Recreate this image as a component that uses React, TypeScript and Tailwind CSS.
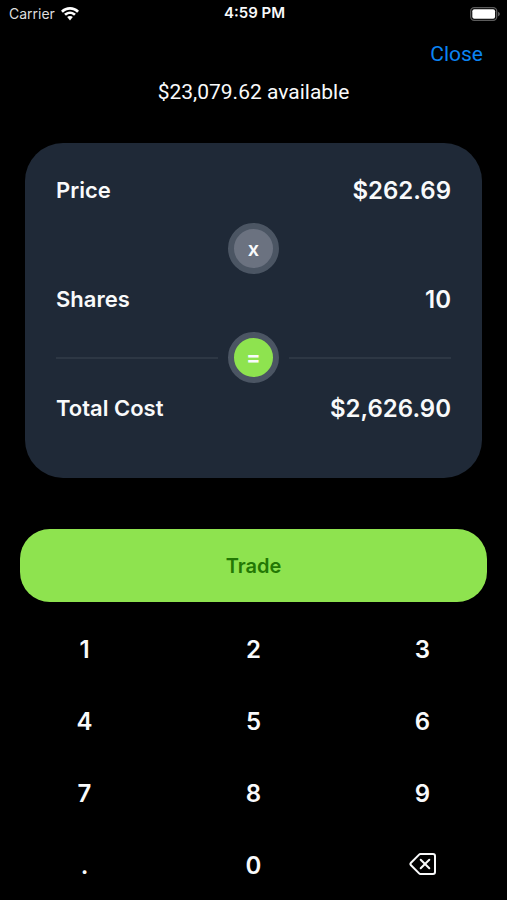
import React, { useCallback, useState } from 'react'

const price = 262.69
const available = 23079.62

const keys: ReadonlyArray<string> = ['1', '2', '3', '4', '5', '6', '7', '8', '9', '.', '0']

const formatUsd = (value: number): string =>
  value.toLocaleString('en-US', { style: 'currency', currency: 'USD' })

const WifiIcon = (): React.JSX.Element => (
  <svg viewBox="0 0 18 14" className="h-[14px] w-[18px]" fill="#fff" aria-hidden="true">
    <path d="M9 0C5.600 0 2.500 1.300 0 3.700L1.900 5.700C3.800 3.900 6.300 2.800 9 2.800s5.200 1.100 7.100 2.900L18 3.700C15.500 1.300 12.400 0 9 0Z" />
    <path d="M9 4.400c-2.300 0-4.300.9-5.900 2.400L5 8.800c1.100-1 2.500-1.700 4-1.700s2.900.7 4 1.700l1.900-2C13.300 5.300 11.300 4.400 9 4.400Z" />
    <path d="M9 8.900c-1.100 0-2.100.4-2.800 1.100L9 13.600l2.800-3.600C11.100 9.300 10.100 8.900 9 8.900Z" />
  </svg>
)

const BatteryIcon = (): React.JSX.Element => (
  <svg viewBox="0 0 30 14" className="h-[14px] w-[30px]" aria-hidden="true">
    <rect x="0.700" y="0.700" width="26" height="12.600" rx="3.500" fill="none" stroke="#5c5c5c" strokeWidth="1.300" />
    <rect x="2.300" y="2.300" width="22.800" height="9.400" rx="2" fill="#fff" />
    <path d="M28 4.700c1.200.4 1.900 1.300 1.900 2.300S29.200 8.900 28 9.300Z" fill="#5c5c5c" />
  </svg>
)

const DeleteIcon = (): React.JSX.Element => (
  <svg
    viewBox="0 0 28 24"
    className="h-6 w-7"
    fill="none"
    stroke="currentColor"
    strokeWidth="2"
    strokeLinecap="round"
    strokeLinejoin="round"
    aria-hidden="true"
  >
    <path d="M11.500 2H24a2 2 0 0 1 2 2v16a2 2 0 0 1-2 2H11.500a2 2 0 0 1-1.400-.6L2 13.200a1.700 1.700 0 0 1 0-2.400l8.100-8.200A2 2 0 0 1 11.500 2Z" />
    <path d="m11.700 7.700 8.600 8.600M20.300 7.700l-8.600 8.600" />
  </svg>
)

const StatusBar = (): React.JSX.Element => (
  <div className="grid h-[27px] grid-cols-3 items-center pr-[7px] pl-[9px]">
    <div className="flex items-center gap-[6px] text-[14px] text-[#dedede]">
      <span>Carrier</span>
      <WifiIcon />
    </div>
    <span className="text-center text-[15px] font-semibold">4:59 PM</span>
    <div className="flex justify-end">
      <BatteryIcon />
    </div>
  </div>
)

type RowProps = {
  readonly label: string
  readonly value: string
}

const Row = ({ label, value }: RowProps): React.JSX.Element => (
  <div className="flex h-[51px] items-center justify-between">
    <dt className="text-[22px] font-semibold">{label}</dt>
    <dd className="text-[24px] font-semibold">{value}</dd>
  </div>
)

type OperatorProps = {
  readonly symbol: string
  readonly className: string
}

const Operator = ({ symbol, className }: OperatorProps): React.JSX.Element => (
  <span
    className={`flex size-[51px] shrink-0 items-center justify-center rounded-full border-[6px] border-[#4b5563] font-semibold ${className}`}
  >
    {symbol}
  </span>
)

export default function App(): React.JSX.Element {
  const [shares, setShares] = useState('10')

  const pressKey = useCallback((key: string) => {
    setShares(s => (key === '.' && s.includes('.') ? s : `${s}${key}`))
  }, [])
  const removeLast = useCallback(() => setShares(s => s.slice(0, -1)), [])

  return (
    <main className="flex min-h-screen flex-col bg-black font-['Inter',sans-serif] text-gray-50">
      <StatusBar />
      <div className="flex h-[51px] items-end justify-end px-6 pb-2 font-['Roboto',sans-serif]">
        <button type="button" className="text-[21px] text-[#0b84f3]">
          Close
        </button>
      </div>
      <p className="text-center font-['Roboto',sans-serif] text-[21px] leading-7">
        {formatUsd(available)} available
      </p>

      <dl className="mx-[25px] mt-[37px] rounded-[38px] bg-[#1f2937] px-[31px] pt-[22px] pb-11">
        <Row label="Price" value={formatUsd(price)} />
        <div className="mt-[7px] flex justify-center">
          <Operator symbol="x" className="bg-[#6b7280] text-[20px]" />
        </div>
        <Row label="Shares" value={shares} />
        <div className="mt-[7px] flex items-center gap-[10px]">
          <span className="h-[2px] flex-1 bg-[#2d3744]" />
          <Operator symbol="=" className="bg-[#8ee34f] text-[22px]" />
          <span className="h-[2px] flex-1 bg-[#2d3744]" />
        </div>
        <Row label="Total Cost" value={formatUsd(price * Number(shares))} />
      </dl>

      <button
        type="button"
        className="mx-5 mt-[51px] h-[73px] rounded-[30px] bg-[#8ee34f] text-[20px] font-semibold text-[#237804]"
      >
        Trade
      </button>

      <div className="mt-[10px] grid grid-cols-3">
        {keys.map(key => (
          <button
            key={key}
            type="button"
            onClick={() => pressKey(key)}
            className="h-[72px] pt-1 text-[24px] font-semibold"
          >
            {key}
          </button>
        ))}
        <button
          type="button"
          aria-label="Delete"
          onClick={removeLast}
          className="flex h-[72px] items-center justify-center"
        >
          <DeleteIcon />
        </button>
      </div>
    </main>
  )
}
